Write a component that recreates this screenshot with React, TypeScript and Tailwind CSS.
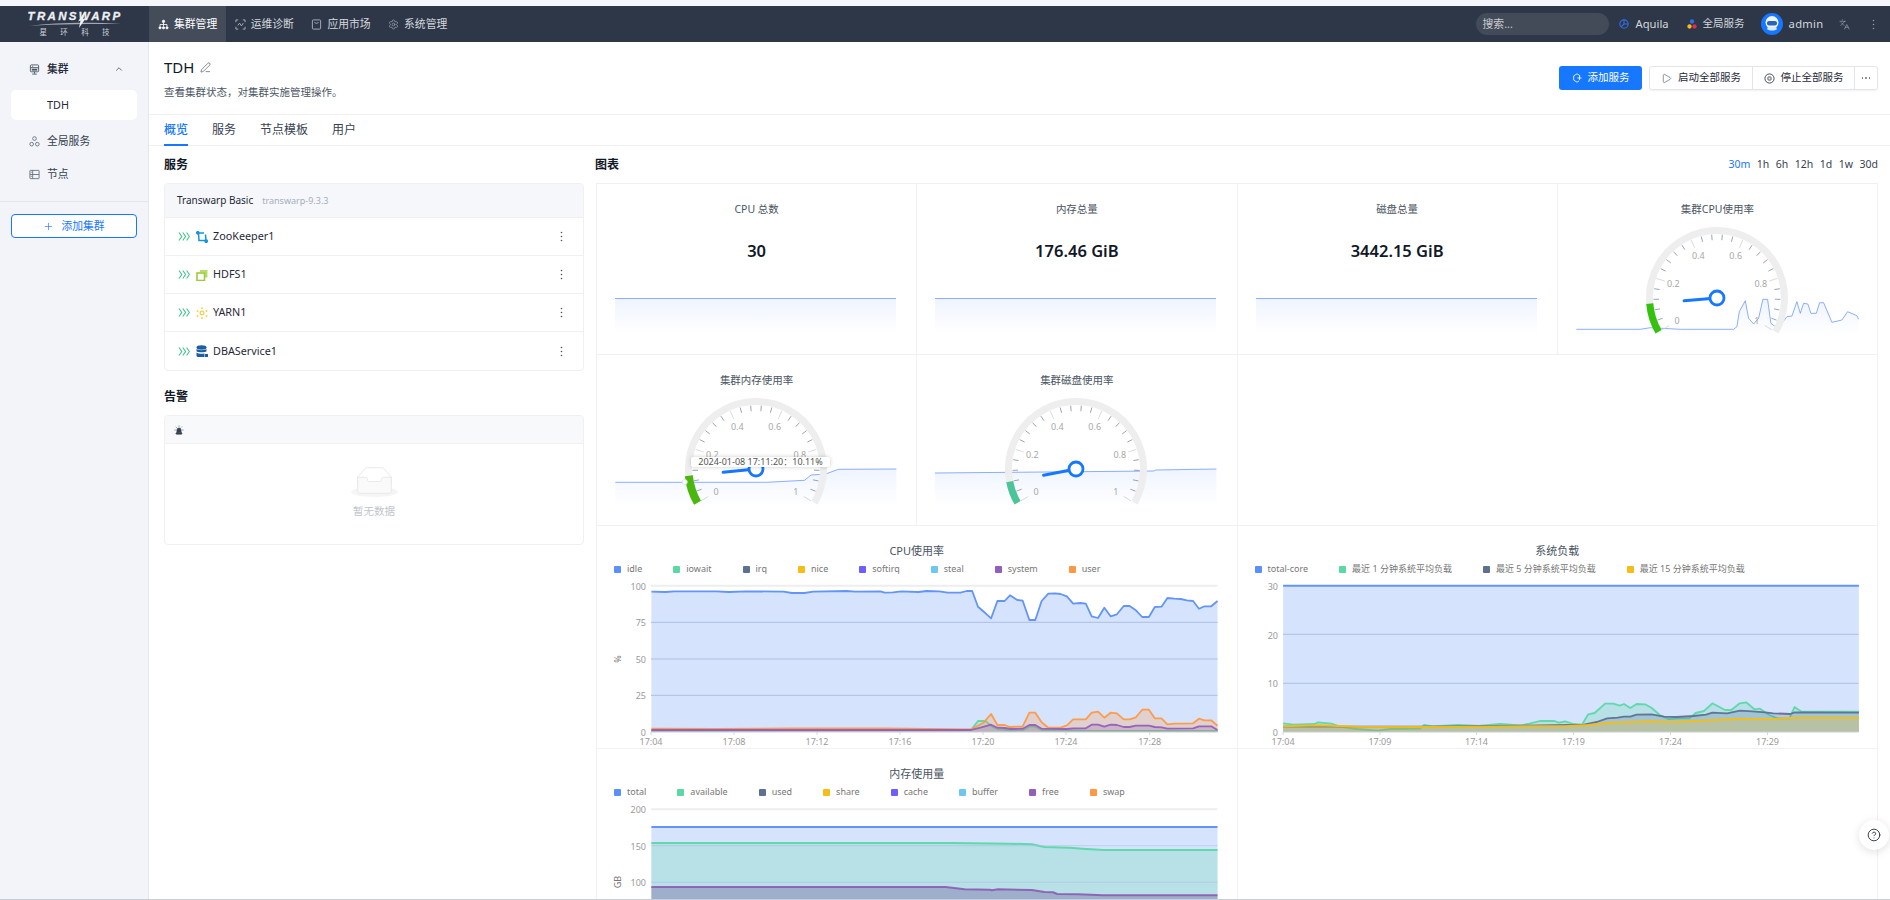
import React from "react";
import { ChevronUp, CircleHelp, Languages, PenLine, Play, Plus, Settings, Siren } from "lucide-react";

type P = [number, number];
const line = (pts: P[]) => pts.map((p, i) => `${i ? "L" : "M"}${p[0].toFixed(1)} ${p[1].toFixed(1)}`).join(" ");
const area = (pts: P[], base: number) =>
  `${line(pts)} L${pts[pts.length - 1][0].toFixed(1)} ${base} L${pts[0][0].toFixed(1)} ${base} Z`;

const C = { blue: "#5b8ff9", green: "#5ad8a6", slate: "#5d7092", yellow: "#f6bd16", violet: "#6f5ef9", sky: "#6dc8ec", purple: "#945fb9", orange: "#ff9845" };

function Logo() {
  return (
    <div className="w-[149px] shrink-0 flex flex-col items-center justify-center relative">
      <div className="text-[11.5px] leading-[11px] font-bold italic tracking-[2.3px] text-[#eef0f3] font-['Liberation_Sans',sans-serif] [-webkit-text-stroke:0.3px_#eef0f3] ml-[1px]">TRANSWARP</div>
      <svg width="96" height="6" viewBox="0 0 96 6" className="block -mt-[1px]">
        <path d="M2 5 C30 1 66 1 94 3 C66 3 30 3 2 5Z" fill="#a3a9b3" />
      </svg>
      <div className="flex justify-between w-[70px] text-[7.5px] leading-[9px] text-[#cbd0d8] mt-[1px]">
        <span>星</span><span>环</span><span>科</span><span>技</span>
      </div>
      <svg width="10" height="16" viewBox="0 0 10 16" className="absolute left-[77px] top-[6px]">
        <path d="M7.500 0 6 7 9 6 2 16 3.500 8.500 1 9.500Z" fill="#eef0f3" />
      </svg>
    </div>
  );
}

function NavIcon({ kind }: { kind: number }) {
  const c = kind === 0 ? "#ffffff" : "#aeb4bf";
  if (kind === 0)
    return (
      <svg width="11" height="11" viewBox="0 0 12 12" fill="none" stroke={c} strokeWidth="0.900">
        <circle cx="6" cy="2.600" r="1.300" fill={c} /><circle cx="2.200" cy="9.600" r="1.200" fill={c} /><circle cx="6" cy="9.600" r="1.200" fill={c} /><circle cx="9.800" cy="9.600" r="1.200" fill={c} />
        <path d="M6 4v4M6 6H2.200v2M6 6h3.800v2" />
      </svg>
    );
  if (kind === 1)
    return (
      <svg width="11" height="11" viewBox="0 0 12 12" fill="none" stroke={c} strokeWidth="1">
        <path d="M1 3.500V1h2.500M8.500 1H11v2.500M11 8.500V11H8.500M3.500 11H1V8.500M3 7l2-2.500 2 3 2-3" />
      </svg>
    );
  if (kind === 2)
    return (
      <svg width="11" height="11" viewBox="0 0 12 12" fill="none" stroke={c} strokeWidth="1">
        <rect x="1.500" y="1" width="9" height="10" rx="1" /><path d="M4 3.500c0 1.600 4 1.600 4 0" />
      </svg>
    );
  return <Settings size={11} color={c} strokeWidth={1.300} />;
}

function Header() {
  const items = ["集群管理", "运维诊断", "应用市场", "系统管理"];
  return (
    <header className="h-[36px] shrink-0 bg-[#2d3748] flex items-stretch text-[10.800px] text-[#d4d7dd]">
      <Logo />
      <nav className="flex">
        {items.map((t, i) => (
          <div key={t} className={`w-[76.700px] pl-[9px] flex items-center gap-[5px] ${i === 0 ? "bg-[#444c5a] text-white" : ""}`}>
            <NavIcon kind={i} />
            <span>{t}</span>
          </div>
        ))}
      </nav>
      <div className="ml-auto flex items-center pr-[15px]">
        <div className="w-[133px] h-[22px] rounded-full bg-[#434a58] pl-[7px] flex items-center text-[#c7cbd2]">搜索...</div>
        <svg width="10" height="10" viewBox="0 0 12 12" fill="none" stroke="#2f6fe8" strokeWidth="1.300" className="ml-[10px]">
          <circle cx="6" cy="6" r="5" /><path d="M6 1v5h5M2.500 9.500 6 6" />
        </svg>
        <span className="ml-[7px] text-[11.200px] text-[#d4d7dd]">Aquila</span>
        <svg width="10" height="10" viewBox="0 0 12 12" className="ml-[18px]">
          <circle cx="6" cy="3" r="2.600" fill="#2f6fe8" /><circle cx="3" cy="9" r="2.600" fill="#f6bd16" /><circle cx="9" cy="9" r="2.600" fill="#ea2a4f" />
        </svg>
        <span className="ml-[6px] text-[10.500px]">全局服务</span>
        <svg width="22" height="22" viewBox="0 0 22 22" className="ml-[16px]">
          <circle cx="11" cy="11" r="11" fill="#1677ff" />
          <circle cx="11" cy="9.500" r="6.500" fill="#f1f5fb" />
          <rect x="6" y="8" width="10" height="4.500" rx="2" fill="#2a66b8" />
          <path d="M6 16c2 2 8 2 10 0l-1-2H7z" fill="#dbe8fa" />
        </svg>
        <span className="ml-[6px] text-[11.200px] tracking-[0.3px]">admin</span>
        <Languages size={11} color="#b4bac4" strokeWidth={1.200} className="ml-[15.500px]" />
        <svg width="3" height="11" viewBox="0 0 3 11" className="ml-[22px]">
          <circle cx="1.500" cy="1.500" r="0.800" fill="#8d94a1" /><circle cx="1.500" cy="5.500" r="0.800" fill="#8d94a1" /><circle cx="1.500" cy="9.500" r="0.800" fill="#8d94a1" />
        </svg>
      </div>
    </header>
  );
}

function Sidebar() {
  return (
    <aside className="w-[149px] shrink-0 bg-[#f2f4f9] border-r border-[#e4e6ee] flex flex-col text-[10.800px] text-[#374151]">
      <div className="h-[160px] pt-[17px] border-b border-[#e4e6ee]">
        <div className="h-[20px] flex items-center pl-[29px] pr-[24px] gap-[7px] text-[#1f2937]">
          <svg width="11" height="11" viewBox="0 0 12 12" fill="none" stroke="#4b5563" strokeWidth="1">
            <rect x="1.500" y="1" width="9" height="7.500" rx="1" /><path d="M1.500 4h9M3.500 2.500h1M6 8.500v2M3.500 11h5" /><rect x="3" y="5.200" width="6" height="2" fill="#4b5563" stroke="none" />
          </svg>
          <span className="font-medium">集群</span>
          <ChevronUp size={10} className="ml-auto" color="#4b5563" />
        </div>
        <div className="mt-[11px] mx-[11px] h-[30px] rounded-[5px] bg-white pl-[36px] flex items-center text-[#1f2937]">TDH</div>
        <div className="mt-[11px] h-[20px] flex items-center pl-[29px] gap-[7px]">
          <svg width="11" height="11" viewBox="0 0 12 12" fill="none" stroke="#6b7280" strokeWidth="1">
            <circle cx="6" cy="2.800" r="2" /><circle cx="2.900" cy="8.900" r="2" /><circle cx="9.100" cy="8.900" r="2" />
          </svg>
          <span>全局服务</span>
        </div>
        <div className="mt-[13px] h-[20px] flex items-center pl-[29px] gap-[7px]">
          <svg width="11" height="11" viewBox="0 0 12 12" fill="none" stroke="#6b7280" strokeWidth="1">
            <rect x="1" y="1.500" width="10" height="9" rx="0.500" /><path d="M1 6h10M4 1.500v9" /><path d="M2 3.500h1M2 8h1" />
          </svg>
          <span>节点</span>
        </div>
      </div>
      <button className="mt-[12px] mx-[11px] h-[24px] rounded-[4px] border border-[#1677ff] bg-white flex items-center justify-center gap-[7px] text-[#1677ff]">
        <Plus size={11} strokeWidth={1.400} />
        <span>添加集群</span>
      </button>
    </aside>
  );
}

function Kebab() {
  return (
    <svg width="3" height="11" viewBox="0 0 3 11">
      <circle cx="1.500" cy="1.500" r="0.800" fill="#4b5563" /><circle cx="1.500" cy="5.500" r="0.800" fill="#4b5563" /><circle cx="1.500" cy="9.500" r="0.800" fill="#4b5563" />
    </svg>
  );
}

function Chevrons() {
  return (
    <svg width="12" height="11" viewBox="0 0 12 11" fill="none" stroke="#3ec58a" strokeWidth="1.100">
      <path d="M1 1.500 3.800 5.500 1 9.500M4.800 1.500 7.600 5.500 4.800 9.500M8.600 1.500 11.400 5.500 8.600 9.500" />
    </svg>
  );
}

function ServiceIcon({ n }: { n: number }) {
  if (n === 0)
    return (
      <svg width="12" height="12" viewBox="0 0 12 12" fill="none" stroke="#1296db" strokeWidth="1.500">
        <path d="M1.500 2H8M2.500 2 3 9.500H10M9.500 3.500 10 10" /><circle cx="1.800" cy="1.800" r="1.100" fill="#1296db" /><circle cx="10.200" cy="10.200" r="1.100" fill="#1296db" />
      </svg>
    );
  if (n === 1)
    return (
      <svg width="12" height="12" viewBox="0 0 12 12" fill="none">
        <path d="M4 1h7.500v7.500H9V3.500H4z" fill="#b9dd6a" /><rect x="1" y="4" width="7.500" height="7.500" stroke="#9ccc3c" strokeWidth="1.600" />
      </svg>
    );
  if (n === 2)
    return (
      <svg width="12" height="12" viewBox="0 0 12 12" fill="#fbd34d">
        <circle cx="6" cy="6" r="2" fill="none" stroke="#f6bd16" strokeWidth="1" /><circle cx="6" cy="1.200" r="1" /><circle cx="1.500" cy="4" r="1" /><circle cx="10.500" cy="4" r="1" /><circle cx="1.500" cy="9" r="1" /><circle cx="10.500" cy="9" r="1" /><circle cx="6" cy="11" r="1" />
      </svg>
    );
  return (
    <svg width="12" height="12" viewBox="0 0 12 12" fill="#1f5fa0">
      <ellipse cx="5.500" cy="2.500" rx="5" ry="2.200" /><path d="M0.500 4c1 1.500 9 1.500 10 0v2.200c-1 1.500-9 1.500-10 0z" /><path d="M0.500 7.500c1 1.500 7 1.500 8 1V12H2.500c-1 0-2-.5-2-1.500z" /><rect x="9" y="9" width="3" height="3" />
    </svg>
  );
}

const services = ["ZooKeeper1", "HDFS1", "YARN1", "DBAService1"];

function LeftColumn() {
  return (
    <section className="w-[420px] shrink-0 flex flex-col">
      <h3 className="h-[14px] leading-[14px] text-[12px] font-semibold text-[#111827]">服务</h3>
      <div className="mt-[11px] border border-[#eef0f4] rounded-[4px] overflow-hidden">
        <div className="h-[34px] bg-[#f6f7fb] border-b border-[#eef0f4] pl-[12px] flex items-center gap-[9px]">
          <span className="text-[10px] text-[#1f2937]">Transwarp Basic</span>
          <span className="text-[9px] text-[#a6aebb]">transwarp-9.3.3</span>
        </div>
        {services.map((s, i) => (
          <div key={s} className={`h-[38px] flex items-center pl-[13px] pr-[20px] ${i < 3 ? "border-b border-[#eef0f4]" : ""}`}>
            <Chevrons />
            <span className="ml-[6px] w-[12px] flex"><ServiceIcon n={i} /></span>
            <span className="ml-[5px] text-[10.800px] text-[#1f2937]">{s}</span>
            <span className="ml-auto flex"><Kebab /></span>
          </div>
        ))}
      </div>
      <h3 className="mt-[19px] h-[14px] leading-[14px] text-[12px] font-semibold text-[#111827]">告警</h3>
      <div className="mt-[11px] h-[130px] border border-[#eef0f4] rounded-[4px] overflow-hidden">
        <div className="h-[28px] bg-[#f8f9fb] border-b border-[#eef0f4] pl-[9px] flex items-center">
          <Siren size={10} color="#374151" fill="#374151" strokeWidth={1.500} />
        </div>
        <div className="flex flex-col items-center pt-[23px]">
          <svg width="47" height="30" viewBox="0 0 64 41">
            <g transform="translate(0 1)" fill="none" fillRule="evenodd">
              <ellipse fill="#f5f5f5" cx="32" cy="33" rx="32" ry="7" />
              <g fillRule="nonzero" stroke="#e2e2e2">
                <path d="M55 12.760L44.854 1.258C44.367.474 43.656 0 42.907 0H21.093c-.749 0-1.460.474-1.947 1.257L9 12.761V22h46v-9.240z" />
                <path d="M41.613 15.931c0-1.605.994-2.930 2.227-2.931H55v18.137C55 33.260 53.680 35 52.050 35h-40.100C10.320 35 9 33.259 9 31.137V13h11.160c1.233 0 2.227 1.323 2.227 2.928v.022c0 1.605 1.005 2.901 2.237 2.901h14.752c1.232 0 2.237-1.308 2.237-2.913v-.007z" fill="#fafafa" />
              </g>
            </g>
          </svg>
          <span className="mt-[7px] text-[10.500px] text-[#c1c5cc]">暂无数据</span>
        </div>
      </div>
    </section>
  );
}

function Sparkline({ pts, base, id }: { pts: P[]; base: number; id: string }) {
  const top = Math.min(...pts.map((p) => p[1]));
  return (
    <>
      <defs>
        <linearGradient id={id} gradientUnits="userSpaceOnUse" x1="0" y1={top} x2="0" y2={base}>
          <stop offset="0" stopColor="#5b8ff9" stopOpacity="0.1" />
          <stop offset="1" stopColor="#5b8ff9" stopOpacity="0" />
        </linearGradient>
      </defs>
      <path d={area(pts, base)} fill={`url(#${id})`} />
      <path d={line(pts)} fill="none" stroke="#5b8ff9" strokeOpacity="0.7" strokeWidth="1" />
    </>
  );
}

const pol = (cx: number, cy: number, r: number, deg: number): P => {
  const a = (deg * Math.PI) / 180;
  return [cx + r * Math.cos(a), cy - r * Math.sin(a)];
};
const arc = (cx: number, cy: number, r: number, a0: number, a1: number) => {
  const s = pol(cx, cy, r, a0);
  const e = pol(cx, cy, r, a1);
  const large = a0 - a1 > 180 ? 1 : 0;
  return `M${s[0].toFixed(2)} ${s[1].toFixed(2)} A${r} ${r} 0 ${large} 1 ${e[0].toFixed(2)} ${e[1].toFixed(2)}`;
};

function Gauge({ value, color, width = 7 }: { value: number; color: string; width?: number }) {
  const cx = 159;
  const cy = 75;
  const end = 210 - 240 * value;
  const ticks = [];
  for (let i = 0; i <= 25; i++) {
    const d = 210 - 9.600 * i;
    const major = i % 5 === 0;
    const a = pol(cx, cy, 63.500, d);
    const b = pol(cx, cy, major ? 55 : 58, d);
    ticks.push(<line key={i} x1={a[0]} y1={a[1]} x2={b[0]} y2={b[1]} stroke={major ? "#d0d0d0" : "#7f8da3"} strokeWidth="0.800" />);
  }
  const labels = ["0", "0.2", "0.4", "0.6", "0.8", "1"];
  const tip = pol(cx, cy, 33, end);
  return (
    <g>
      <path d={arc(cx, cy, 67.500, 210, -30)} fill="none" stroke="#eeeeee" strokeWidth="7" />
      <path d={arc(cx, cy, 67.500, 210, end)} fill="none" stroke={color} strokeWidth={width} />
      {ticks}
      {labels.map((l, i) => {
        const p = pol(cx, cy, 46, 210 - 48 * i);
        return (
          <text key={l} x={p[0]} y={p[1] + 3} textAnchor="middle" fontSize="9" fill="#a8a8a8">{l}</text>
        );
      })}
      <line x1={cx} y1={cy} x2={tip[0]} y2={tip[1]} stroke="#1677ff" strokeWidth="3" strokeLinecap="round" />
      <circle cx={cx} cy={cy} r="7" fill="#fff" stroke="#1677ff" strokeWidth="2.800" />
    </g>
  );
}

function StatCell({ title, value, id }: { title: string; value: string; id: string }) {
  return (
    <div className="h-[171px] border-r border-b border-[#f0f1f4] flex flex-col">
      <div className="h-[14px] mt-[18px] leading-[14px] text-center text-[10.500px] text-[#4b5563]">{title}</div>
      <div className="h-[30px] mt-[20px] leading-[30px] text-center text-[16.500px] font-semibold text-[#111827]">{value}</div>
      <svg width="320" height="40" viewBox="0 0 320 40" className="mt-[32px] block">
        <Sparkline pts={[[18, 0.500], [299, 0.500]]} base={36} id={id} />
      </svg>
    </div>
  );
}

function GaugeCell({ title, children, tooltip }: { title: string; children: React.ReactNode; tooltip?: string }) {
  return (
    <div className="relative h-[171px] border-r border-b border-[#f0f1f4] flex flex-col">
      <div className="h-[14px] mt-[18px] leading-[14px] text-center text-[10.500px] text-[#4b5563]">{title}</div>
      <svg width="320" height="131" viewBox="0 0 320 131" className="mt-[7px] block overflow-hidden">
        {children}
      </svg>
      {tooltip && (
        <div className="absolute left-[94px] top-[102px] h-[10px] w-[139px] bg-white rounded-[2px] shadow-[0_0_4px_rgba(0,0,0,0.2)] text-center text-[9px] leading-[10px] text-[#555]">
          {tooltip}
        </div>
      )}
    </div>
  );
}

const cpuSpark: P[] = ([[108,448],[300,448],[330,443],[420,448],[580,448],[590,440],[597,395],[615,362],[625,415],[640,432],[655,415],[668,358],[682,358],[692,430],[705,440],[725,430],[740,410],[755,408],[770,365],[780,400],[790,370],[803,372],[812,400],[828,400],[838,368],[850,368],[875,427],[905,420],[922,395],[950,407],[955,418]] as P[]).map(([x, y]) => [x / 3 - 17.750, y / 3 - 43] as P);
const memSpark: P[] = ([[60,367],[420,367],[510,361],[525,345],[560,342],[590,328],[728,327]] as P[]).map(([x, y]) => [x / 2.376 - 7, y / 3 - 34] as P);
const diskSpark: P[] = ([[820,339],[1340,333],[1345,330],[1489,327]] as P[]).map(([x, y]) => [x / 2.376 - 327.250, y / 3 - 34] as P);

function Legend({ items }: { items: [string, string][] }) {
  return (
    <div className="h-[12px] mt-[5px] pl-[17px] flex items-center gap-[31px] text-[9px] leading-[12px] text-[#777]">
      {items.map(([n, c]) => (
        <div key={n} className="flex items-center gap-[6px]">
          <span className="w-[7px] h-[7px] rounded-[1px]" style={{ background: c }} />
          <span>{n}</span>
        </div>
      ))}
    </div>
  );
}

function Series({ pts, color, base, w = 1.800 }: { pts: P[]; color: string; base: number; w?: number }) {
  return (
    <>
      <path d={area(pts, base)} fill={color} fillOpacity="0.25" />
      <path d={line(pts)} fill="none" stroke={color} strokeWidth={w} strokeOpacity="0.95" strokeLinejoin="round" />
    </>
  );
}

function ChartCell({ title, legend, children, height = 170 }: { title: string; legend: [string, string][]; children: React.ReactNode; height?: number }) {
  return (
    <div className="col-span-2 h-[223px] border-r border-b border-[#f0f1f4]">
      <div className="h-[14px] mt-[18px] leading-[14px] text-center text-[11px] text-[#4b5563]">{title}</div>
      <Legend items={legend} />
      <svg width="640" height={height} viewBox={`0 0 640 ${height}`} className="block mt-[3px] overflow-hidden">
        {children}
      </svg>
    </div>
  );
}

const mapCpu = (a: number[][]): P[] => a.map(([x, y]) => [x / 2.376 - 7, y / 3 - 48] as P);
const mapLoad = (a: number[][]): P[] => a.map(([x, y]) => [x / 2.376 - 7.500, y / 3 - 48] as P);
const mapMem = (a: number[][]): P[] => a.map(([x, y]) => [x / 2.376 - 7, y / 3 - 51] as P);

const idle = mapCpu([[146,185],[180,186],[200,184],[300,184],[330,186],[370,184],[460,185],[480,189],[510,189],[530,185],[610,183],[630,185],[690,184],[700,188],[720,187],[740,184],[780,186],[800,183],[830,184],[850,188],[880,188],[895,183],[908,183],[922,230],[940,250],[953,265],[968,213],[985,213],[998,196],[1015,210],[1028,212],[1044,270],[1058,270],[1073,213],[1089,191],[1105,190],[1118,192],[1133,199],[1148,221],[1165,219],[1178,221],[1192,259],[1207,264],[1222,233],[1237,259],[1252,253],[1268,228],[1282,228],[1297,241],[1312,261],[1328,261],[1342,231],[1358,230],[1372,204],[1388,206],[1404,207],[1418,211],[1433,213],[1447,236],[1460,229],[1476,229],[1491,213]]);
const user = mapCpu([[146,596],[300,597],[480,595],[700,595],[905,598],[935,578],[953,552],[968,585],[985,585],[998,591],[1028,589],[1044,548],[1058,548],[1073,577],[1089,593],[1118,593],[1133,586],[1148,568],[1178,568],[1192,548],[1207,545],[1222,563],[1237,548],[1252,550],[1268,568],[1282,568],[1297,562],[1312,539],[1328,539],[1342,565],[1358,565],[1372,583],[1388,581],[1433,580],[1447,566],[1460,571],[1476,571],[1491,587]]);
const system = mapCpu([[146,600],[905,600],[930,592],[953,584],[968,593],[985,594],[1000,597],[1028,596],[1044,585],[1058,585],[1073,596],[1133,597],[1148,595],[1178,595],[1192,584],[1207,584],[1222,590],[1237,584],[1252,585],[1268,591],[1282,591],[1297,587],[1328,587],[1342,591],[1358,592],[1372,596],[1433,595],[1447,589],[1476,589],[1491,600]]);
const iowait = mapCpu([[146,603],[905,600],[922,573],[940,573],[955,590],[968,597],[1000,602],[1030,600],[1044,590],[1058,590],[1073,600],[1200,603],[1491,603]]);

const total = mapLoad([[125,167],[1493,167]]);
const m1 = mapLoad([[125,580],[150,584],[200,582],[208,577],[240,581],[260,590],[300,597],[350,602],[380,597],[450,596],[460,585],[480,589],[540,585],[590,588],[640,582],[690,586],[710,581],[735,573],[770,573],[780,578],[795,574],[815,582],[835,584],[850,553],[865,549],[890,521],[910,521],[925,527],[935,522],[950,534],[965,522],[985,523],[1000,533],[1020,555],[1040,567],[1070,565],[1090,565],[1105,549],[1125,543],[1145,520],[1175,540],[1190,540],[1210,520],[1225,517],[1245,538],[1258,536],[1280,555],[1300,565],[1328,565],[1340,531],[1355,544],[1493,545]]);
const m5 = mapLoad([[125,590],[300,590],[450,590],[700,587],[840,584],[870,576],[895,565],[920,563],[935,560],[950,560],[965,554],[1000,553],[1030,560],[1060,561],[1100,558],[1130,554],[1145,548],[1180,550],[1210,542],[1240,544],[1270,547],[1290,550],[1330,552],[1340,547],[1493,548]]);
const m15 = mapLoad([[125,589],[210,586],[300,590],[450,591],[600,590],[800,588],[850,585],[900,578],[950,576],[1000,574],[1050,576],[1100,573],[1200,567],[1300,566],[1340,563],[1493,563]]);

const memTotal = mapMem([[146,231],[1491,231]]);
const avail = mapMem([[146,279],[860,279],[1000,281],[1050,283],[1080,291],[1140,293],[1170,296],[1220,300],[1491,300]]);
const free = mapMem([[146,411],[845,411],[890,418],[950,419],[955,421],[970,418],[1050,420],[1080,426],[1100,427],[1110,432],[1160,433],[1220,436],[1491,436]]);

function YLabels({ rows, x }: { rows: [string, number][]; x: number }) {
  return (
    <>
      {rows.map(([t, y]) => (
        <text key={t} x={x} y={y + 3.500} textAnchor="end" fontSize="9" fill="#9a9a9a">{t}</text>
      ))}
    </>
  );
}

function CpuChart() {
  const base = 154;
  const grid = [277, 387, 496].map((y) => y / 3 - 48);
  const ticks: [string, number][] = [["17:04", 54], ["17:08", 137], ["17:12", 220], ["17:16", 303], ["17:20", 386], ["17:24", 469], ["17:28", 552.700]];
  return (
    <ChartCell
      title="CPU使用率"
      legend={[["idle", C.blue], ["iowait", C.green], ["irq", C.slate], ["nice", C.yellow], ["softirq", C.violet], ["steal", C.sky], ["system", C.purple], ["user", C.orange]]}
    >
      <line x1="54" x2="620.500" y1="7.700" y2="7.700" stroke="#eeeeee" strokeWidth="2" />
      <Series pts={idle} color={C.blue} base={base} />
      <Series pts={iowait} color={C.green} base={base} />
      <Series pts={user} color={C.orange} base={base} />
      <Series pts={system} color={C.purple} base={base} />
      {grid.map((y) => (
        <line key={y} x1="54" x2="620.500" y1={y} y2={y} stroke="#aebfe3" strokeWidth="1" />
      ))}
      <line x1="54" x2="620.500" y1={base} y2={base} stroke="#c9ced8" strokeWidth="1" />
      <YLabels x={49} rows={[["100", 8], ["75", 44.500], ["50", 81], ["25", 117.500], ["0", 154]]} />
      <text x="24" y="81" fontSize="9" fill="#777" textAnchor="middle" transform="rotate(-90 24 81)">%</text>
      {ticks.map(([t, x]) => (
        <g key={t}>
          <line x1={x} x2={x} y1={base} y2={base + 3} stroke="#c9ced8" strokeWidth="0.800" />
          <text x={x} y={167} textAnchor="middle" fontSize="9" fill="#9a9a9a">{t}</text>
        </g>
      ))}
    </ChartCell>
  );
}

function LoadChart() {
  const base = 154;
  const ticks: [string, number][] = [["17:04", 45.100], ["17:09", 141.900], ["17:14", 238.500], ["17:19", 335.500], ["17:24", 432.500], ["17:29", 529.500]];
  return (
    <ChartCell
      title="系统负载"
      legend={[["total-core", C.blue], ["最近 1 分钟系统平均负载", C.green], ["最近 5 分钟系统平均负载", C.slate], ["最近 15 分钟系统平均负载", C.yellow]]}
    >
      <Series pts={total} color={C.blue} base={base} w={2} />
      <Series pts={m1} color={C.green} base={base} />
      <Series pts={m5} color={C.slate} base={base} />
      <Series pts={m15} color={C.yellow} base={base} w={2} />
      {[56.300, 105.300].map((y) => (
        <line key={y} x1="45.100" x2="620.500" y1={y} y2={y} stroke="#aebfe3" strokeWidth="1" />
      ))}
      <line x1="45.100" x2="620.500" y1={base} y2={base} stroke="#c9ced8" strokeWidth="1" />
      <YLabels x={40} rows={[["30", 8], ["20", 57], ["10", 105], ["0", 154]]} />
      {ticks.map(([t, x]) => (
        <g key={t}>
          <line x1={x} x2={x} y1={base} y2={base + 3} stroke="#c9ced8" strokeWidth="0.800" />
          <text x={x} y={167} textAnchor="middle" fontSize="9" fill="#9a9a9a">{t}</text>
        </g>
      ))}
    </ChartCell>
  );
}

function MemChart() {
  const base = 160;
  return (
    <ChartCell
      title="内存使用量"
      height={100}
      legend={[["total", C.blue], ["available", C.green], ["used", C.slate], ["share", C.yellow], ["cache", C.violet], ["buffer", C.sky], ["free", C.purple], ["swap", C.orange]]}
    >
      <line x1="54" x2="620.500" y1="8.300" y2="8.300" stroke="#eeeeee" strokeWidth="2" />
      <Series pts={memTotal} color={C.blue} base={base} w={2} />
      <Series pts={avail} color={C.green} base={base} w={2} />
      <Series pts={free} color={C.purple} base={base} w={2} />
      <path d={area(free, base)} fill={C.slate} fillOpacity="0.2" />
      {[44.700, 81.300].map((y) => (
        <line key={y} x1="54" x2="620.500" y1={y} y2={y} stroke="#aebfe3" strokeOpacity="0.6" strokeWidth="1" />
      ))}
      <YLabels x={49} rows={[["200", 8.300], ["150", 45], ["100", 81.500]]} />
      <text x="24" y="81" fontSize="9" fill="#777" textAnchor="middle" transform="rotate(-90 24 81)">GB</text>
    </ChartCell>
  );
}

function RightColumn() {
  return (
    <section className="flex-1 min-w-0 flex flex-col">
      <div className="h-[14px] flex items-center justify-between">
        <h3 className="-ml-[1px] text-[12px] leading-[14px] font-semibold text-[#111827]">图表</h3>
        <div className="flex gap-[6.500px] text-[10.500px] text-[#374151]">
          <span className="text-[#1677ff]">30m</span><span>1h</span><span>6h</span><span>12h</span><span>1d</span><span>1w</span><span>30d</span>
        </div>
      </div>
      <div className="mt-[11px] grid grid-cols-4 border-l border-t border-[#f0f1f4]">
        <StatCell title="CPU 总数" value="30" id="s1" />
        <StatCell title="内存总量" value="176.46 GiB" id="s2" />
        <StatCell title="磁盘总量" value="3442.15 GiB" id="s3" />
        <GaugeCell title="集群CPU使用率">
          <Sparkline pts={cpuSpark} base={112} id="g1" />
          <Gauge value={0.105} color="#35c20f" />
        </GaugeCell>
        <GaugeCell title="集群内存使用率" tooltip="2024-01-08 17:11:20：10.11%">
          <Sparkline pts={memSpark} base={112} id="g2" />
          <Gauge value={0.1011} color="#4ab70f" width={8} />
          <circle cx="87.700" cy="88" r="2.500" fill="#fff" stroke="#dbe4f5" />
        </GaugeCell>
        <GaugeCell title="集群磁盘使用率">
          <Sparkline pts={diskSpark} base={112} id="g3" />
          <Gauge value={0.08} color="#4cc49a" />
        </GaugeCell>
        <div className="col-span-2 h-[171px] border-r border-b border-[#f0f1f4]" />
        <CpuChart />
        <LoadChart />
        <MemChart />
        <div className="col-span-2 h-[223px] border-r border-[#f0f1f4]" />
      </div>
    </section>
  );
}

function Main() {
  return (
    <main className="flex-1 min-w-0 bg-white relative overflow-hidden">
      <div className="h-[73px] border-b border-[#eef0f4] pl-[15px] pr-[12px] flex justify-between">
        <div>
          <div className="mt-[14px] h-[22px] flex items-center gap-[6px]">
            <span className="text-[15px] leading-[22px] text-[#111827]">TDH</span>
            <PenLine size={11} color="#374151" strokeWidth={1.300} />
          </div>
          <div className="mt-[7px] text-[10.500px] leading-[14px] text-[#4b5563]">查看集群状态，对集群实施管理操作。</div>
        </div>
        <div className="mt-[24px] flex h-[24px] text-[10.500px]">
          <button className="w-[83px] h-[24px] rounded-[3px] bg-[#1677ff] text-white flex items-center justify-center gap-[6px]">
            <svg width="10" height="10" viewBox="0 0 12 12" fill="none" stroke="#fff" strokeWidth="1">
              <path d="M10 3.500 6 1 2 3.500v5L6 11l2.500-1.500" /><path d="M6.500 6h5M9 3.500v5" />
            </svg>
            <span>添加服务</span>
          </button>
          <div className="ml-[7px] w-[229px] h-[24px] rounded-[3px] border border-[#e3e5ea] shadow-[0_1px_2px_rgba(0,0,0,0.06)] flex text-[#1f2937]">
            <div className="w-[103px] border-r border-[#e3e5ea] flex items-center justify-center gap-[6px]">
              <Play size={11} strokeWidth={1.200} color="#374151" />
              <span>启动全部服务</span>
            </div>
            <div className="w-[102px] border-r border-[#e3e5ea] flex items-center justify-center gap-[6px]">
              <svg width="11" height="11" viewBox="0 0 12 12" fill="none" stroke="#374151" strokeWidth="1">
                <circle cx="6" cy="6" r="5" /><rect x="4.300" y="4.300" width="3.400" height="3.400" rx="0.800" />
              </svg>
              <span>停止全部服务</span>
            </div>
            <div className="flex-1 flex items-center justify-center gap-[2px]">
              <span className="w-[1.500px] h-[1.500px] rounded-full bg-[#6b7280]" /><span className="w-[1.500px] h-[1.500px] rounded-full bg-[#6b7280]" /><span className="w-[1.500px] h-[1.500px] rounded-full bg-[#6b7280]" />
            </div>
          </div>
        </div>
      </div>
      <div className="h-[31px] border-b border-[#eef0f4] pl-[15px] flex gap-[24px] text-[12px] text-[#374151]">
        <div className="h-[31px] leading-[30px] border-b-2 border-[#1677ff] text-[#1677ff] font-medium">概览</div>
        <div className="h-[31px] leading-[30px]">服务</div>
        <div className="h-[31px] leading-[30px]">节点模板</div>
        <div className="h-[31px] leading-[30px]">用户</div>
      </div>
      <div className="pt-[12px] pl-[15px] pr-[12px] flex gap-[12px]">
        <LeftColumn />
        <RightColumn />
      </div>
      <div className="absolute right-[1px] top-[778px] w-[30px] h-[30px] rounded-full bg-white shadow-[0_2px_10px_rgba(0,0,0,0.12)] flex items-center justify-center">
        <CircleHelp size={14} color="#1f2937" strokeWidth={1.500} />
      </div>
    </main>
  );
}

export default function App() {
  return (
    <div className="w-[1890px] h-[900px] overflow-hidden flex flex-col bg-white font-['Noto_Sans','Noto_Sans_CJK_SC',sans-serif]">
      <div className="h-[6px] shrink-0 bg-[#f5f6fa]" />
      <Header />
      <div className="flex-1 min-h-0 flex">
        <Sidebar />
        <Main />
      </div>
      <div className="h-[1px] shrink-0 bg-[#c9cdd4]" />
    </div>
  );
}
